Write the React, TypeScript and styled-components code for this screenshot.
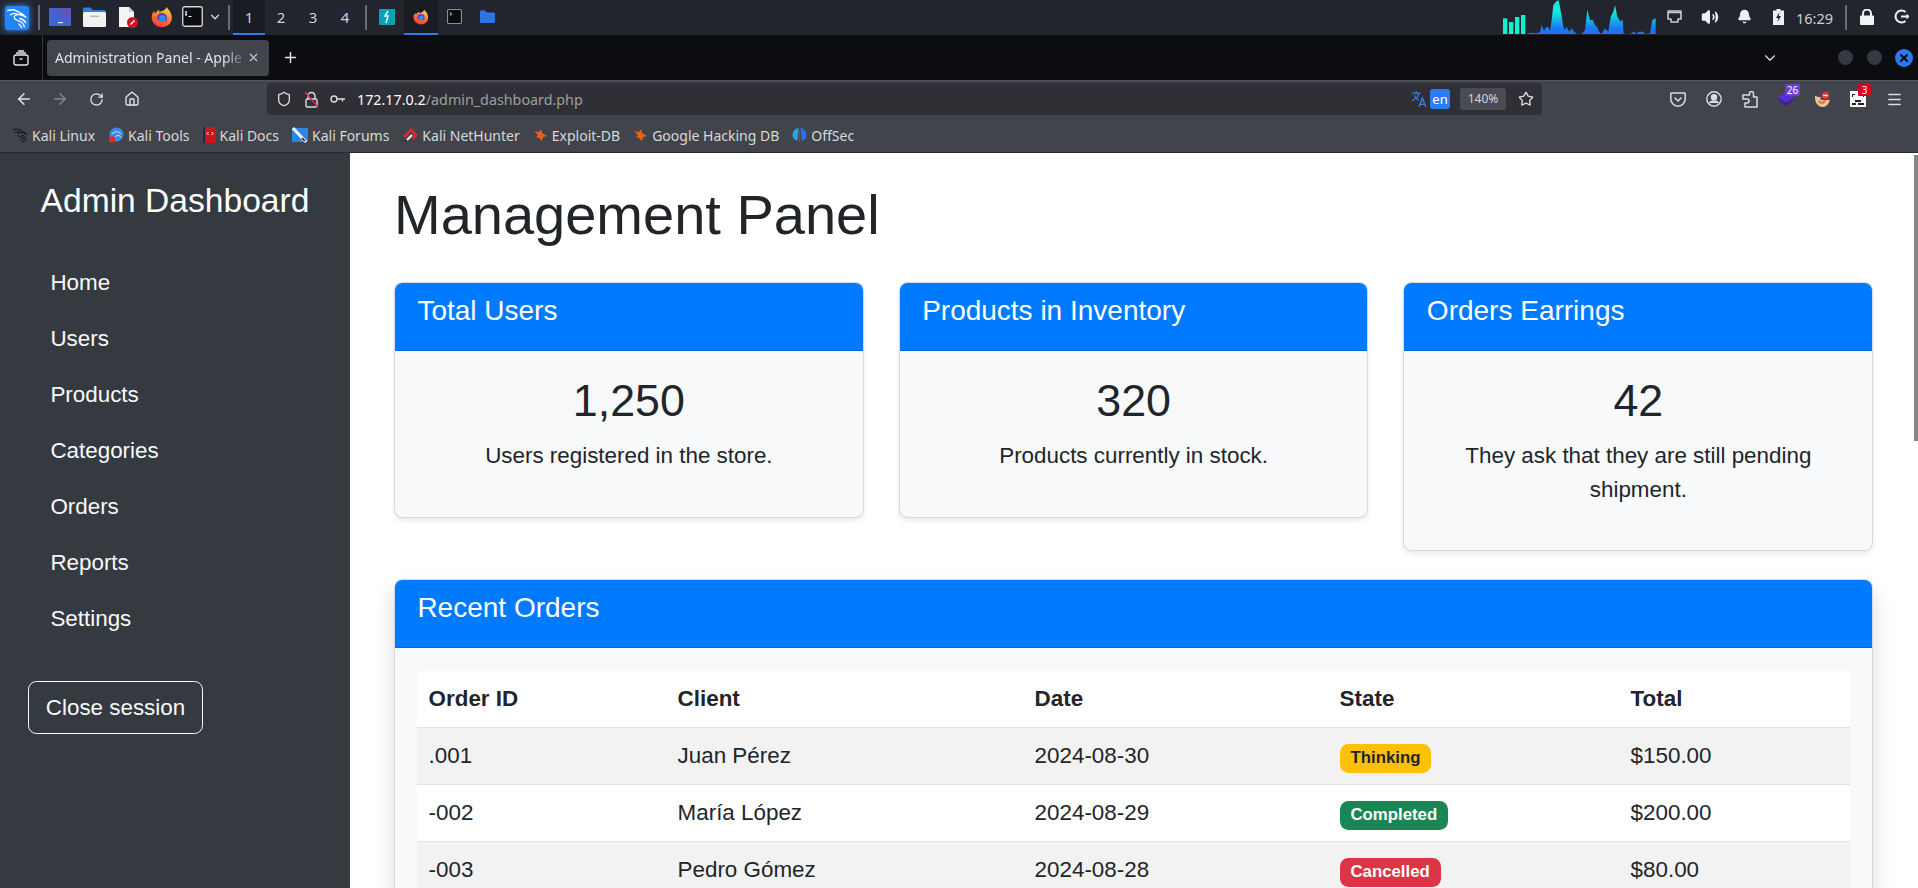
import React from 'react';
import styled, { createGlobalStyle } from 'styled-components';
import {
	ArrowLeft,
	ArrowRight,
	Bell,
	ChevronDown,
	House,
	Menu,
	Plus,
	RotateCw,
	Shield,
	Star,
	Volume2,
	X,
} from 'lucide-react';

const GlobalStyle = createGlobalStyle`
	html, body {
		margin: 0;
		padding: 0;
		height: 888px;
		overflow: hidden;
		background: #fff;
	}
	* {
		box-sizing: border-box;
	}
`;

const Desktop = styled.div`
	display: flex;
	flex-direction: column;
	width: 1918px;
	height: 888px;
	overflow: hidden;
	font-family: 'Liberation Sans', Arial, sans-serif;
`;

/* ---- xfce panel ---- */

const Panel = styled.div`
	display: flex;
	align-items: stretch;
	flex: 0 0 35px;
	padding-left: 5px;
	background: #23252e;
	color: #e8e8ea;
	font-family: 'Noto Sans', sans-serif;
`;

const PanelCell = styled.div<{ $w: number; $active?: boolean }>`
	display: flex;
	align-items: center;
	justify-content: center;
	flex: 0 0 ${(p) => p.$w}px;
	font-size: 15px;
	color: #cfd0d5;
	background: ${(p) => (p.$active ? '#1a1c23' : 'transparent')};
	border-bottom: 2px solid ${(p) => (p.$active ? '#2f7fe8' : 'transparent')};
`;

const PanelSep = styled.div<{ $ml: number; $mr?: number }>`
	flex: 0 0 2px;
	margin: 5px ${(p) => p.$mr ?? 0}px 5px ${(p) => p.$ml}px;
	background: #6b6d73;
`;

const KaliLogo = styled.div`
	display: flex;
	align-items: center;
	justify-content: center;
	align-self: center;
	width: 24px;
	height: 24px;
	border-radius: 3px;
	background: #2585f5;
	box-shadow: 0 0 6px #2f8cff;
`;

const Tray = styled.div`
	display: flex;
	align-items: stretch;
	margin-left: auto;
`;

const GraphSvg = styled.svg`
	align-self: flex-end;
	width: 153px;
	height: 34px;
	margin-bottom: 1px;
`;

const Clock = styled.div`
	align-self: center;
	width: 36px;
	margin-left: 1px;
	font-size: 14.5px;
	color: #cfd0d4;
	white-space: nowrap;
`;

/* ---- browser chrome ---- */

const TabStrip = styled.div`
	display: flex;
	align-items: center;
	flex: 0 0 45px;
	background: #0c0d11;
	color: #e6e6e8;
	font-family: 'Noto Sans', sans-serif;
`;

const ViewButton = styled.div`
	display: flex;
	align-items: center;
	justify-content: center;
	align-self: stretch;
	width: 43px;
	border-right: 1px solid #35363b;
`;

const Tab = styled.div`
	display: flex;
	align-items: center;
	width: 222px;
	height: 36px;
	margin-left: 4px;
	padding: 0 9px 0 8px;
	border-radius: 4px;
	background: #42444c;
	font-size: 14px;
`;

const TabTitle = styled.span`
	flex: 1;
	white-space: nowrap;
	color: #e2e2e5;
	-webkit-mask-image: linear-gradient(to right, #000 88%, transparent);
	mask-image: linear-gradient(to right, #000 88%, transparent);
`;

const NewTab = styled.div`
	display: flex;
	justify-content: center;
	width: 42px;
`;

const WindowControls = styled.div`
	display: flex;
	align-items: center;
	gap: 14px;
	margin-left: auto;
	padding-right: 5px;
`;

const ListAll = styled.div`
	display: flex;
	margin-right: 45px;
`;

const WindowDot = styled.div<{ $close?: boolean }>`
	display: flex;
	align-items: center;
	justify-content: center;
	width: ${(p) => (p.$close ? 18 : 15)}px;
	height: ${(p) => (p.$close ? 18 : 15)}px;
	margin-left: ${(p) => (p.$close ? -1 : 0)}px;
	border-radius: 50%;
	background: ${(p) => (p.$close ? '#2a78f0' : '#353944')};
	color: #0c0d11;
`;

const NavBar = styled.div`
	display: flex;
	align-items: center;
	flex: 0 0 37px;
	padding-left: 6px;
	border-top: 1px solid #55565c;
	background: #42444c;
	color: #e4e4e7;
	font-family: 'Noto Sans', sans-serif;
`;

const NavButton = styled.div<{ $dim?: boolean }>`
	display: flex;
	align-items: center;
	justify-content: center;
	width: 36px;
	opacity: ${(p) => (p.$dim ? 0.4 : 1)};
`;

const UrlBar = styled.div`
	display: flex;
	align-items: center;
	width: 1275px;
	height: 32px;
	margin-left: 117px;
	padding: 0 8px 0 9px;
	border-radius: 4px;
	background: #2f3036;
`;

const UrlIcon = styled.div<{ $w: number }>`
	display: flex;
	align-items: center;
	justify-content: center;
	flex: 0 0 ${(p) => p.$w}px;
`;

const UrlText = styled.div`
	flex: 1;
	margin-left: 11px;
	font-size: 14.3px;
	color: #fbfbfe;
`;

const UrlPath = styled.span`
	color: #9d9ea3;
`;

const LangBadge = styled.div`
	width: 20px;
	height: 20px;
	margin: 0 10px 0 2px;
	border-radius: 3px;
	background: #2b7cf5;
	color: #fff;
	font-size: 13px;
	line-height: 21px;
	text-align: center;
`;

const ZoomBox = styled.div`
	width: 46px;
	height: 22px;
	margin-right: 12px;
	border-radius: 3px;
	background: #4b4c52;
	color: #d2d2d5;
	font-size: 12px;
	line-height: 22px;
	text-align: center;
`;

const ToolIcons = styled.div`
	display: flex;
	margin-left: auto;
	padding-right: 6px;
`;

const ToolIcon = styled.div`
	display: flex;
	align-items: center;
	justify-content: center;
	position: relative;
	width: 36px;
	height: 24px;
`;

const CountBadge = styled.span<{ $bg: string; $w: number; $r: number }>`
	position: absolute;
	top: -3px;
	right: ${(p) => p.$r}px;
	width: ${(p) => p.$w}px;
	height: 12px;
	border-radius: 1px;
	background: ${(p) => p.$bg};
	color: #fff;
	font-size: 10px;
	line-height: 12px;
	text-align: center;
`;

const BookmarkBar = styled.div`
	display: flex;
	align-items: center;
	gap: 13px;
	flex: 0 0 36px;
	padding: 1px 0 0 12px;
	border-bottom: 1px solid #27282d;
	background: #42444c;
	font-family: 'Noto Sans', sans-serif;
`;

const Bookmark = styled.div`
	display: flex;
	align-items: center;
	gap: 4px;
	font-size: 14px;
	color: #d8d8db;
	white-space: nowrap;
`;

/* ---- the dashboard page ---- */

const Page = styled.div`
	display: flex;
	position: relative;
	flex: 1;
	min-height: 0;
	overflow: hidden;
	background: #fff;
	color: #212529;
	font-size: 22.4px;
	line-height: 1.5;
`;

const Sidebar = styled.aside`
	flex: 0 0 350px;
	padding: 28px;
	background: #343a40;
	color: #fff;
`;

const Brand = styled.h4`
	margin: 0 0 33.6px;
	font-size: 33.6px;
	font-weight: 400;
	line-height: 1.2;
	text-align: center;
`;

const NavLink = styled.a`
	display: block;
	padding: 11.2px 22.4px;
	color: #f8f9fa;
	text-decoration: none;
`;

const LogoutButton = styled.button`
	display: block;
	margin-top: 34.6px;
	padding: 8.4px 16.8px;
	border: 1.4px solid #f8f9fa;
	border-radius: 8.4px;
	background: transparent;
	color: #f8f9fa;
	font: inherit;
`;

const Main = styled.main`
	flex: 1;
	min-width: 0;
	padding: 28px 44.8px 28px 44px;
`;

const Title = styled.h1`
	margin: 0 0 33.6px;
	font-size: 56px;
	font-weight: 400;
	line-height: 1.2;
`;

const StatRow = styled.div`
	display: grid;
	grid-template-columns: repeat(3, 1fr);
	align-items: start;
	gap: 35px;
	margin-bottom: 28px;
`;

const Card = styled.section<{ $raised?: boolean }>`
	overflow: hidden;
	border: 1.4px solid rgba(0, 0, 0, 0.125);
	border-radius: 8.4px;
	background: #f8f9fa;
	box-shadow: ${(p) =>
		p.$raised ? '0 11.2px 22.4px rgba(0, 0, 0, 0.15)' : '0 2.8px 5.6px rgba(0, 0, 0, 0.075)'};
`;

const CardHeader = styled.div`
	padding: 11.2px 22.4px;
	border-bottom: 1.4px solid rgba(0, 0, 0, 0.125);
	background: #007bff;
	color: #fff;
`;

const CardTitle = styled.h5`
	margin: 0 0 11.2px;
	font-size: 28px;
	font-weight: 400;
	line-height: 1.2;
`;

const StatBody = styled.div`
	padding: 23.4px 22.4px 21.4px;
	text-align: center;
`;

const StatValue = styled.div`
	margin-bottom: 11.2px;
	font-size: 44.8px;
	line-height: 1.2;
`;

const StatText = styled.p`
	margin: 0 0 22.4px;
`;

const OrdersBody = styled.div`
	padding: 22.4px;
`;

const OrdersTable = styled.table`
	width: 100%;
	table-layout: fixed;
	border-collapse: collapse;
	background: #fff;
`;

const HeadCell = styled.th<{ $w?: number }>`
	width: ${(p) => (p.$w ? `${p.$w}px` : 'auto')};
	padding: 11.2px;
	border-bottom: 1.4px solid #dee2e6;
	font-weight: 700;
	text-align: left;
`;

const Row = styled.tr`
	&:nth-child(odd) {
		background: #f2f2f2;
	}
`;

const Cell = styled.td`
	padding: 11.2px;
	border-bottom: 1.4px solid #dee2e6;
`;

const Badge = styled.span<{ $bg: string; $fg: string }>`
	display: inline-block;
	padding: 5.9px 10.9px;
	border-radius: 8.4px;
	background: ${(p) => p.$bg};
	color: ${(p) => p.$fg};
	font-size: 16.8px;
	font-weight: 700;
	line-height: 1;
	vertical-align: baseline;
`;

const Scrollbar = styled.div`
	position: absolute;
	top: 2px;
	right: 0;
	width: 4px;
	height: 286px;
	background: #84888a;
`;

/* ---- drawn icons ---- */

const KaliDragon = ({ size = 22, color = '#fff' }: { size?: number; color?: string }) => (
	<svg width={size} height={size} viewBox="0 0 24 24" fill="none" stroke={color} strokeWidth="1.500" strokeLinecap="round">
		<path d="M2 4c3-1.500 7-1 10 .5 3.500 1.800 7 2.800 10 7-3-2.500-6-3.500-9-3.200-2.500.2-4 1.500-4 3.200 0 2 2.500 3 5.500 4 2.500.8 4.500 2 5.500 6" />
		<path d="M5 8.500c2-1.500 4.500-1.800 6.500-1" />
		<path d="M15 12.500c2.500.5 5 2 6.500 4.500" />
		<path d="M14 18.500c1.500 1 2.500 2.500 3 4" />
	</svg>
);

const Firefox = ({ size = 22 }: { size?: number }) => (
	<svg width={size} height={size} viewBox="0 0 24 24">
		<defs>
			<linearGradient id="ffOuter" x1="0.7" y1="0" x2="0.2" y2="1">
				<stop offset="0" stopColor="#ffd23c" />
				<stop offset="0.5" stopColor="#ff7a2e" />
				<stop offset="1" stopColor="#e8304f" />
			</linearGradient>
		</defs>
		<path
			d="M17 1c1 2 3 3 4.500 6.500C23.500 12 23 17 19.500 20.300 16 23.500 10 24 6 21.500 2 19 0 14 1 10c.5-2 1.500-3.500 2.500-4.500 0 1 .3 2 1 2.600C5.500 6 7.500 4.500 10 4c-1 1-1.500 1.800-1.500 2.500 3 -1 7 -1.500 8.500 -5.500z"
			fill="url(#ffOuter)"
		/>
		<circle cx="12" cy="13" r="5.500" fill="#5a3fd6" />
		<circle cx="12.500" cy="13.500" r="3.500" fill="#2f8ff0" />
		<path d="M4 11c2 3 5 6 10 6 3 0 5-2 6-5-.5 5-4 8-8 8-4.500 0-8-4-8-9z" fill="#ff5a2e" />
	</svg>
);

const TerminalIcon = ({ size = 21, compact }: { size?: number; compact?: boolean }) => (
	<svg width={size} height={size} viewBox="0 0 21 21">
		<rect x="0.750" y="0.750" width="19.500" height="19.500" rx="2" fill="#0d0d10" stroke={compact ? '#8e8f94' : '#d8d8dc'} strokeWidth={compact ? 1.600 : 1.300} />
		{compact ? (
			<path d="M4 5l2.500 2L4 9" stroke="#e8e8ea" strokeWidth="1.400" fill="none" />
		) : (
			<path d="M4 5v5M3.300 6.200h1.800M3.300 8.500h1.800M6.500 10.500h3" stroke="#fff" strokeWidth="1" fill="none" />
		)}
	</svg>
);

const FolderIcon = () => (
	<svg width="23" height="20" viewBox="0 0 23 20">
		<path d="M0 2a1.500 1.500 0 0 1 1.500-1.500h6L10 3h11.500A1.500 1.500 0 0 1 23 4.500V7H0z" fill="#2f7fe0" />
		<rect y="5" width="23" height="15" rx="1.500" fill="#f2f2f2" />
		<rect x="7" y="8.500" width="9" height="1.500" rx="0.700" fill="#b9b9b9" />
	</svg>
);

const BlueFolder = () => (
	<svg width="15" height="13" viewBox="0 0 15 13">
		<path d="M0 1.500A1 1 0 0 1 1 .5h4L7 2.500h7a1 1 0 0 1 1 1V12a1 1 0 0 1-1 1H1a1 1 0 0 1-1-1z" fill="#2b74e6" />
	</svg>
);

const NetworkIcon = () => (
	<svg width="15" height="14" viewBox="0 0 15 14" fill="none" stroke="#c9cacd" strokeWidth="1.600">
		<path d="M1.500 1h12a.5.500 0 0 1 .5.500V9h-3v3H4V9H1V1.500a.5.500 0 0 1 .5-.5z" strokeLinejoin="round" />
		<path d="M1 2.500h13" />
	</svg>
);

const BatteryIcon = () => (
	<svg width="11" height="16" viewBox="0 0 11 16">
		<path d="M3.500 0h4v1.500H11V16H0V1.500h3.500z" fill="#f0f0f2" />
		<path d="M6.500 3L3 9h2.200L4.500 13 8 7H5.800z" fill="#23252e" />
	</svg>
);

const PadlockIcon = () => (
	<svg width="14" height="16" viewBox="0 0 14 16">
		<path d="M3 7V4.500a4 4 0 0 1 8 0V7" fill="none" stroke="#f2f2f4" strokeWidth="2" />
		<rect y="6.500" width="14" height="9.500" rx="1" fill="#f2f2f4" />
	</svg>
);

const PowerIcon = () => (
	<svg width="15" height="15" viewBox="0 0 15 15" fill="none" stroke="#f0f0f2" strokeWidth="2">
		<path d="M11.500 3A6 6 0 1 0 11.500 12" />
		<path d="M7 7.500h7.500" />
		<path d="M12.500 5.500l2 2-2 2" strokeWidth="1.300" />
	</svg>
);

const NetGraph = () => {
	const bars: [number, number][] = [
		[69, 55],
		[87, 66],
		[105, 51],
		[123, 45],
	];
	const outline =
		'140,102 150,98 170,100 180,96 185,75 192,92 198,82 205,82 210,92 215,60 220,15 228,5 235,0 240,20 245,50 250,80 255,90 260,80 268,95 275,85 283,95 290,102 305,102 315,90 322,30 330,60 338,60 345,75 352,82 358,97 365,102 375,85 385,95 392,50 400,35 405,15 412,50 422,65 428,58 431,102 450,102 462,95 470,102 475,95 490,95 495,102 510,100 517,60 527,55 527,102';
	return (
		<GraphSvg viewBox="69 0 459 102" preserveAspectRatio="none">
			<defs>
				<linearGradient id="netFill" gradientUnits="userSpaceOnUse" x1="0" y1="0" x2="0" y2="102">
					<stop offset="0.350" stopColor="#10ecdc" />
					<stop offset="0.850" stopColor="#1c74f2" />
				</linearGradient>
			</defs>
			{bars.map(([x, y]) => (
				<rect key={x} x={x} y={y} width="13" height={102 - y} fill="#0ff2cb" />
			))}
			<polygon points={outline} fill="url(#netFill)" />
		</GraphSvg>
	);
};

const TranslateIcon = () => (
	<svg width="17" height="18" viewBox="0 0 16 17" fill="none" stroke="#3a7ff0" strokeWidth="1.200">
		<path d="M1 3h8M5 1v2M7.500 3C7 6 4 9 1 10M3 5c1 2 3 4 4.500 4.500" />
		<path d="M7.500 16l3.200-8.500L14 16M8.700 13.500h4" />
	</svg>
);

const StruckLock = () => (
	<svg width="15" height="17" viewBox="0 0 15 17" fill="none">
		<path d="M4 8V5a3.500 3.500 0 0 1 7 0v3" stroke="#dcdcdf" strokeWidth="1.400" />
		<rect x="2" y="8" width="11" height="8" rx="1.500" stroke="#dcdcdf" strokeWidth="1.400" />
		<path d="M1 1l13 15" stroke="#e22850" strokeWidth="1.500" />
	</svg>
);

const PocketIcon = () => (
	<svg width="16" height="15" viewBox="0 0 16 15" fill="none" stroke="#dcdcdf" strokeWidth="1.500">
		<path d="M1.500 1h13a.7.7 0 0 1 .7.700V7a7.200 7.200 0 0 1-14.400 0V1.700A.7.7 0 0 1 1.500 1z" />
		<path d="M5 6l3 3 3-3" strokeLinecap="round" />
	</svg>
);

const AccountIcon = () => (
	<svg width="16" height="16" viewBox="0 0 16 16" fill="none" stroke="#dcdcdf" strokeWidth="1.400">
		<circle cx="8" cy="8" r="7.200" />
		<circle cx="8" cy="6.200" r="2.500" fill="#dcdcdf" />
		<path d="M3.500 12c1-1.500 2.500-2 4.500-2s3.500.5 4.500 2" fill="#dcdcdf" />
	</svg>
);

const PuzzleIcon = () => (
	<svg width="16" height="17" viewBox="0 0 16 17" fill="none" stroke="#dcdcdf" strokeWidth="1.500" strokeLinejoin="round">
		<path d="M6 4h1.500V2.500a2 2 0 0 1 4 0V6H15v10H3v-4h2a2 2 0 0 0 0-4H1V4z" />
	</svg>
);

const PurpleExt = () => (
	<svg width="16" height="14" viewBox="0 0 16 14">
		<path d="M8 0l8 5-8 5-8-5z" fill="#5b2bd8" />
		<path d="M0 8l8 5 8-5-8 6z" fill="#3b1aa0" />
		<path d="M0 6l8 5 8-5v2l-8 5-8-5z" fill="#3f1cb0" />
	</svg>
);

const FoxExt = () => (
	<svg width="17" height="17" viewBox="0 0 17 17">
		<path d="M1 5c2 1 5 1 7.500 1S14 6 16 5c.5 5-2 11-7.500 11S.5 10 1 5z" fill="#f0c09a" />
		<path d="M4 9l4 2 4-3-1 4-3 1-3-1z" fill="#e07a2a" />
		<rect x="6.500" y="0" width="10" height="9" rx="1" fill="#4a4b50" />
		<circle cx="11.500" cy="4.500" r="3.500" fill="#d83a3a" />
		<rect x="9.300" y="3.800" width="4.400" height="1.400" fill="#fff" />
	</svg>
);

const QrExt = () => (
	<svg width="16" height="16" viewBox="0 0 16 16">
		<rect width="16" height="16" fill="#f5f5f5" />
		<path d="M2 3h3v1H3v2H2zM11 3h3v3h-1V4h-2zM5 9h6v2H5zM2 12h4v2H2zM8 12h6v2H8z" fill="#222" />
	</svg>
);

const KaliMark = () => <KaliDragon size={16} color="#0d0d0d" />;

const ToolsMark = () => (
	<svg width="16" height="16" viewBox="0 0 16 16">
		<circle cx="8.500" cy="7.500" r="7" fill="#3b87e8" />
		<path d="M4 7c3-3 6-3 9 0M7 10c2-2 4-2 6 0" stroke="#dbe9fb" fill="none" />
		<rect x="1" y="9.500" width="6" height="6" rx="1.500" fill="#d92b2b" />
	</svg>
);

const DocsMark = () => (
	<svg width="13" height="16" viewBox="0 0 13 16">
		<rect width="13" height="16" rx="1" fill="#c8161d" />
		<rect width="2" height="16" fill="#1c2a55" />
		<path d="M5.500 5L4 6.500 5.500 8M8.500 5L10 6.500 8.500 8" stroke="#fff" fill="none" />
	</svg>
);

const ForumsMark = () => (
	<svg width="16" height="16" viewBox="0 0 16 16">
		<rect y="1" width="16" height="14" rx="1" fill="#2b86e8" />
		<path d="M1 1l13 14" stroke="#f4f4f4" strokeWidth="3" />
		<path d="M10 11l3 3" stroke="#1a1a1a" strokeWidth="1.500" />
	</svg>
);

const HunterMark = () => (
	<svg width="16" height="16" viewBox="0 0 16 16" fill="none">
		<path d="M2 10L9 3l5 5-3 4" stroke="#d8263a" strokeWidth="3" />
		<path d="M5 13l5-5" stroke="#f0f0f0" strokeWidth="2" />
		<path d="M1 13l3 2" stroke="#333" strokeWidth="1.500" />
	</svg>
);

const ExploitMark = () => (
	<svg width="15" height="15" viewBox="0 0 15 15">
		<path d="M1 3l5 1 2-3 1 4 5 3-4 1-1 4-3-3-3-1 2-2z" fill="#e8601c" />
	</svg>
);

const OffSecMark = () => (
	<svg width="15" height="16" viewBox="0 0 15 16">
		<path d="M6.500 1C3 1.500 .5 4.500 .5 8s2.500 5 5 6z" fill="#2f9fe8" />
		<path d="M8.500 1c3.500.5 6 3.500 6 7s-2.500 5-5 6z" fill="#2f6fe8" />
		<path d="M7 3h1v12l-.5 1-.5-1z" fill="#7a35d8" />
	</svg>
);

const DesktopThumb = () => (
	<svg width="22" height="18" viewBox="0 0 22 18">
		<defs>
			<linearGradient id="thumb" x1="0" y1="1" x2="1" y2="0">
				<stop offset="0" stopColor="#2f6fe0" />
				<stop offset="1" stopColor="#6a4fb8" />
			</linearGradient>
		</defs>
		<rect width="22" height="18" rx="1" fill="url(#thumb)" />
		<rect x="9" y="14" width="5" height="1.200" fill="#dfe3f5" />
	</svg>
);

const FileEdit = () => (
	<svg width="20" height="22" viewBox="0 0 20 22">
		<path d="M1 1h10l5 5v15H1z" fill="#f4f4f4" />
		<path d="M11 1l5 5h-5z" fill="#c9c9c9" />
		<circle cx="14.500" cy="16.500" r="5.500" fill="#cf1322" />
		<path d="M12.500 18.500l4-4" stroke="#fff" strokeWidth="1.500" />
	</svg>
);

const ZapTile = () => (
	<svg width="16" height="16" viewBox="0 0 16 16">
		<rect width="16" height="16" rx="1" fill="#0aa3b5" />
		<path d="M9 2L6 7h3l-2 7" stroke="#e8fbff" strokeWidth="1.500" fill="none" />
	</svg>
);

const TabsIcon = () => (
	<svg width="16" height="16" viewBox="0 0 16 16" fill="none" stroke="#e6e6e8" strokeWidth="1.400">
		<rect x="1" y="5" width="14" height="10" rx="2" />
		<path d="M3 3h10M5 1h6" />
		<path d="M6.500 9h3" />
	</svg>
);

const KeyIcon = () => (
	<svg width="16" height="10" viewBox="0 0 16 10" fill="none" stroke="#dcdcdf" strokeWidth="1.400">
		<circle cx="4" cy="5" r="3" />
		<path d="M7 5h8M12.500 5v2.500" />
	</svg>
);

/* ---- data ---- */

const bookmarks: [React.ReactNode, string][] = [
	[<KaliMark key="a" />, 'Kali Linux'],
	[<ToolsMark key="b" />, 'Kali Tools'],
	[<DocsMark key="c" />, 'Kali Docs'],
	[<ForumsMark key="d" />, 'Kali Forums'],
	[<HunterMark key="e" />, 'Kali NetHunter'],
	[<ExploitMark key="f" />, 'Exploit-DB'],
	[<ExploitMark key="g" />, 'Google Hacking DB'],
	[<OffSecMark key="h" />, 'OffSec'],
];

const links = ['Home', 'Users', 'Products', 'Categories', 'Orders', 'Reports', 'Settings'];

const stats = [
	{ title: 'Total Users', value: '1,250', text: 'Users registered in the store.' },
	{ title: 'Products in Inventory', value: '320', text: 'Products currently in stock.' },
	{ title: 'Orders Earrings', value: '42', text: 'They ask that they are still pending shipment.' },
];

const orders = [
	{ id: '.001', client: 'Juan Pérez', date: '2024-08-30', state: 'Thinking', bg: '#ffc107', fg: '#212529', total: '$150.00' },
	{ id: '-002', client: 'María López', date: '2024-08-29', state: 'Completed', bg: '#198754', fg: '#fff', total: '$200.00' },
	{ id: '-003', client: 'Pedro Gómez', date: '2024-08-28', state: 'Cancelled', bg: '#dc3545', fg: '#fff', total: '$80.00' },
];

function App() {
	return (
		<Desktop>
			<GlobalStyle />
			<Panel>
				<KaliLogo>
					<KaliDragon />
				</KaliLogo>
				<PanelSep $ml={9} $mr={3} />
				<PanelCell $w={34}><DesktopThumb /></PanelCell>
				<PanelCell $w={34}><FolderIcon /></PanelCell>
				<PanelCell $w={34}><FileEdit /></PanelCell>
				<PanelCell $w={34}><Firefox /></PanelCell>
				<PanelCell $w={27}><TerminalIcon /></PanelCell>
				<PanelCell $w={18}><ChevronDown size={14} strokeWidth={2.5} /></PanelCell>
				<PanelSep $ml={4} $mr={3} />
				<PanelCell $w={32} $active>1</PanelCell>
				<PanelCell $w={32}>2</PanelCell>
				<PanelCell $w={32}>3</PanelCell>
				<PanelCell $w={32}>4</PanelCell>
				<PanelSep $ml={4} $mr={3} />
				<PanelCell $w={34}><ZapTile /></PanelCell>
				<PanelCell $w={34} $active><Firefox size={16} /></PanelCell>
				<PanelCell $w={32}><TerminalIcon size={15} compact /></PanelCell>
				<PanelCell $w={34}><BlueFolder /></PanelCell>
				<Tray>
					<NetGraph />
					<PanelCell $w={36}><NetworkIcon /></PanelCell>
					<PanelCell $w={35}><Volume2 size={18} color="#f0f0f2" fill="#f0f0f2" /></PanelCell>
					<PanelCell $w={34}><Bell size={15} color="#f0f0f2" fill="#f0f0f2" /></PanelCell>
					<PanelCell $w={34}><BatteryIcon /></PanelCell>
					<Clock>16:29</Clock>
					<PanelSep $ml={13} $mr={3} />
					<PanelCell $w={34}><PadlockIcon /></PanelCell>
					<PanelCell $w={34}><PowerIcon /></PanelCell>
				</Tray>
			</Panel>

			<TabStrip>
				<ViewButton><TabsIcon /></ViewButton>
				<Tab>
					<TabTitle>Administration Panel - Apple</TabTitle>
					<X size={13} color="#cfcfd2" />
				</Tab>
				<NewTab><Plus size={17} /></NewTab>
				<WindowControls>
					<ListAll><ChevronDown size={18} strokeWidth={1.5} /></ListAll>
					<WindowDot />
					<WindowDot />
					<WindowDot $close><X size={12} strokeWidth={4} /></WindowDot>
				</WindowControls>
			</TabStrip>

			<NavBar>
				<NavButton><ArrowLeft size={18} /></NavButton>
				<NavButton $dim><ArrowRight size={18} /></NavButton>
				<NavButton><RotateCw size={15} /></NavButton>
				<NavButton><House size={16} /></NavButton>
				<UrlBar>
					<UrlIcon $w={16}><Shield size={16} color="#dcdcdf" /></UrlIcon>
					<UrlIcon $w={38}><StruckLock /></UrlIcon>
					<UrlIcon $w={16}><KeyIcon /></UrlIcon>
					<UrlText>
						172.17.0.2<UrlPath>/admin_dashboard.php</UrlPath>
					</UrlText>
					<UrlIcon $w={17}><TranslateIcon /></UrlIcon>
					<LangBadge>en</LangBadge>
					<ZoomBox>140%</ZoomBox>
					<UrlIcon $w={16}><Star size={16} color="#dcdcdf" /></UrlIcon>
				</UrlBar>
				<ToolIcons>
					<ToolIcon><PocketIcon /></ToolIcon>
					<ToolIcon><AccountIcon /></ToolIcon>
					<ToolIcon><PuzzleIcon /></ToolIcon>
					<ToolIcon>
						<PurpleExt />
						<CountBadge $bg="#6b3fc8" $w={15} $r={4}>26</CountBadge>
					</ToolIcon>
					<ToolIcon><FoxExt /></ToolIcon>
					<ToolIcon>
						<QrExt />
						<CountBadge $bg="#d70022" $w={13} $r={5}>3</CountBadge>
					</ToolIcon>
					<ToolIcon><Menu size={17} color="#dcdcdf" /></ToolIcon>
				</ToolIcons>
			</NavBar>

			<BookmarkBar>
				{bookmarks.map(([icon, label]) => (
					<Bookmark key={label}>
						{icon}
						{label}
					</Bookmark>
				))}
			</BookmarkBar>

			<Page>
				<Sidebar>
					<Brand>Admin Dashboard</Brand>
					<nav>
						{links.map((l) => (
							<NavLink key={l} href="#">
								{l}
							</NavLink>
						))}
					</nav>
					<LogoutButton>Close session</LogoutButton>
				</Sidebar>
				<Main>
					<Title>Management Panel</Title>
					<StatRow>
						{stats.map((s) => (
							<Card key={s.title}>
								<CardHeader>
									<CardTitle>{s.title}</CardTitle>
								</CardHeader>
								<StatBody>
									<StatValue>{s.value}</StatValue>
									<StatText>{s.text}</StatText>
								</StatBody>
							</Card>
						))}
					</StatRow>
					<Card $raised>
						<CardHeader>
							<CardTitle>Recent Orders</CardTitle>
						</CardHeader>
						<OrdersBody>
							<OrdersTable>
								<thead>
									<tr>
										<HeadCell $w={249}>Order ID</HeadCell>
										<HeadCell $w={357}>Client</HeadCell>
										<HeadCell $w={305}>Date</HeadCell>
										<HeadCell $w={291}>State</HeadCell>
										<HeadCell>Total</HeadCell>
									</tr>
								</thead>
								<tbody>
									{orders.map((o) => (
										<Row key={o.id}>
											<Cell>{o.id}</Cell>
											<Cell>{o.client}</Cell>
											<Cell>{o.date}</Cell>
											<Cell>
												<Badge $bg={o.bg} $fg={o.fg}>{o.state}</Badge>
											</Cell>
											<Cell>{o.total}</Cell>
										</Row>
									))}
								</tbody>
							</OrdersTable>
						</OrdersBody>
					</Card>
				</Main>
				<Scrollbar />
			</Page>
		</Desktop>
	);
}

export default App;
